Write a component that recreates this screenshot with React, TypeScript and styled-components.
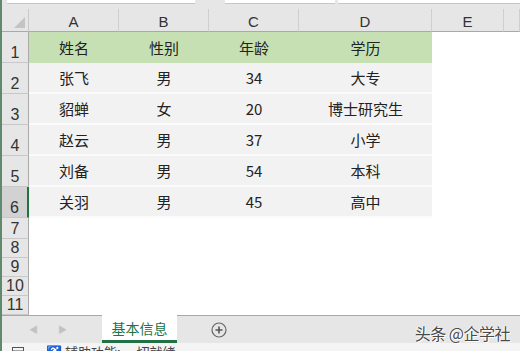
import styled, { createGlobalStyle } from 'styled-components';

const GlobalStyle = createGlobalStyle`
	html, body {
		margin: 0;
		padding: 0;
		background: #ffffff;
	}
	body {
		font-family: 'Liberation Sans', 'Noto Sans CJK SC', sans-serif;
		color: #222;
	}
`;

const Window = styled.div`
	position: relative;
	width: 520px;
	height: 351px;
	overflow: hidden;
	display: flex;
	flex-direction: column;
	background: #e6e6e6;
	border-left: 2px solid #5f8a6d;
	box-sizing: border-box;
`;

const TopStrip = styled.div`
	display: flex;
	height: 9px;
	flex-shrink: 0;
	gap: 30px;
	padding-left: 5px;
	div {
		height: 3px;
		background: #fff;
		border-bottom: 1px solid #c6c6c6;
	}
	div.name {
		width: 188px;
	}
	div.fx {
		width: 110px;
		margin-right: -27px;
	}
	div.formula {
		flex: 1;
	}
`;

const Sheet = styled.div`
	display: grid;
	flex-shrink: 0;
	grid-template-columns: 27px 90px 90px 90px 133px 72px 1fr;
	grid-template-rows: 23px repeat(6, 31px) 21px repeat(4, 19px);
	background: #fff;
`;

const Corner = styled.div`
	background: #e6e6e6;
	border-right: 1px solid #c8c8c8;
	border-bottom: 1px solid #a9a9a9;
	position: relative;
	&::after {
		content: '';
		position: absolute;
		right: 3px;
		bottom: 3px;
		border-left: 11px solid transparent;
		border-bottom: 11px solid #c4c4c4;
	}
`;

const ColHead = styled.div`
	background: #e6e6e6;
	border-right: 1px solid #cfcfcf;
	border-bottom: 1px solid #a9a9a9;
	display: flex;
	align-items: flex-end;
	justify-content: center;
	padding-bottom: 1px;
	font-size: 15px;
	color: #333;
`;

const RowHead = styled.div<{ $active?: boolean }>`
	background: ${({ $active }) => ($active ? '#d2d2d2' : '#e6e6e6')};
	border-right: ${({ $active }) => ($active ? '2px solid #217346' : '1px solid #a9a9a9')};
	border-bottom: 1px solid #c8c8c8;
	display: flex;
	flex-direction: column;
	justify-content: flex-end;
	align-items: center;
	padding-bottom: 1px;
	font-size: 16px;
	line-height: 16px;
	color: #333;
	box-sizing: border-box;
`;

const Cell = styled.div<{ $tone: 'head' | 'data' | 'empty' }>`
	display: flex;
	align-items: center;
	justify-content: center;
	font-family: 'Noto Sans CJK SC', 'Liberation Sans', sans-serif;
	font-size: 15px;
	color: #222;
	background: ${({ $tone }) =>
		$tone === 'head' ? '#c6e0b4' : $tone === 'data' ? '#f2f2f2' : '#ffffff'};
	border-bottom: ${({ $tone }) => ($tone === 'data' ? '2px solid #fbfbfb' : 'none')};
	box-sizing: border-box;
`;

const TabBar = styled.div`
	display: flex;
	align-items: stretch;
	flex-shrink: 0;
	height: 27px;
	border-top: 1px solid #a8a8a8;
	background: #e6e6e6;
`;

const NavArrows = styled.div`
	display: flex;
	align-items: center;
	gap: 20px;
	padding-left: 27px;
	width: 73px;
	color: #c2c2c2;
	font-size: 9px;
`;

const SheetTab = styled.div`
	width: 75px;
	margin-top: -1px;
	background: #fff;
	border-bottom: 3px solid #217346;
	display: flex;
	align-items: center;
	justify-content: center;
	font-family: 'Noto Sans CJK SC', sans-serif;
	font-size: 14px;
	color: #217346;
	box-sizing: border-box;
`;

const AddButton = styled.div`
	display: flex;
	align-items: center;
	padding-left: 34px;
`;

const StatusBar = styled.div`
	flex: 1;
	display: flex;
	align-items: flex-start;
	gap: 22px;
	padding: 2px 0 0 10px;
	background: #f4f4f4;
	font-family: 'Noto Sans CJK SC', sans-serif;
	font-size: 13px;
	line-height: 14px;
	color: #444;
	overflow: hidden;
`;

const Watermark = styled.div`
	position: absolute;
	right: 10px;
	bottom: 6px;
	font-family: 'Noto Sans CJK SC', sans-serif;
	font-size: 16px;
	color: #4a4a4a;
	text-shadow: 1px 1px 0 #fff, -1px 0 0 #fff;
	letter-spacing: -0.5px;
`;

const columns = ['A', 'B', 'C', 'D', 'E'];

const rows = [
	['姓名', '性别', '年龄', '学历'],
	['张飞', '男', '34', '大专'],
	['貂蝉', '女', '20', '博士研究生'],
	['赵云', '男', '37', '小学'],
	['刘备', '男', '54', '本科'],
	['关羽', '男', '45', '高中'],
];

const App = () => {
	return (
		<>
			<GlobalStyle />
			<Window>
				<TopStrip>
					<div className="name" />
					<div className="fx" />
					<div className="formula" />
				</TopStrip>
				<Sheet>
					<Corner />
					{columns.map((c) => (
						<ColHead key={c}>{c}</ColHead>
					))}
					<ColHead />
					{Array.from({ length: 11 }, (_, i) => {
						const r = rows[i];
						return [
							<RowHead key={`h${i}`} $active={i === 5}>
								{i + 1}
							</RowHead>,
							...[0, 1, 2, 3].map((j) => (
								<Cell
									key={`c${i}-${j}`}
									$tone={r ? (i === 0 ? 'head' : 'data') : 'empty'}
								>
									{r ? r[j] : ''}
								</Cell>
							)),
							<Cell key={`e${i}`} $tone="empty" />,
							<Cell key={`f${i}`} $tone="empty" />,
						];
					})}
				</Sheet>
				<TabBar>
					<NavArrows>
						<span>◀</span>
						<span>▶</span>
					</NavArrows>
					<SheetTab>基本信息</SheetTab>
					<AddButton>
						<svg width="16" height="16" viewBox="0 0 16 16">
							<circle cx="8" cy="8" r="7" fill="none" stroke="#666" strokeWidth="1.2" />
							<path d="M8 4.5v7M4.5 8h7" stroke="#555" strokeWidth="1.6" />
						</svg>
					</AddButton>
				</TabBar>
				<StatusBar>
					<svg width="12" height="12" viewBox="0 0 12 12" style={{ marginTop: 2 }}>
						<rect x="0.5" y="0.5" width="11" height="11" fill="none" stroke="#555" />
						<path d="M0.5 4h11" stroke="#555" />
					</svg>
					<span>♿ 辅助功能: 一切就绪</span>
				</StatusBar>
				<Watermark>头条 @企学社</Watermark>
			</Window>
		</>
	);
};

export default App;
